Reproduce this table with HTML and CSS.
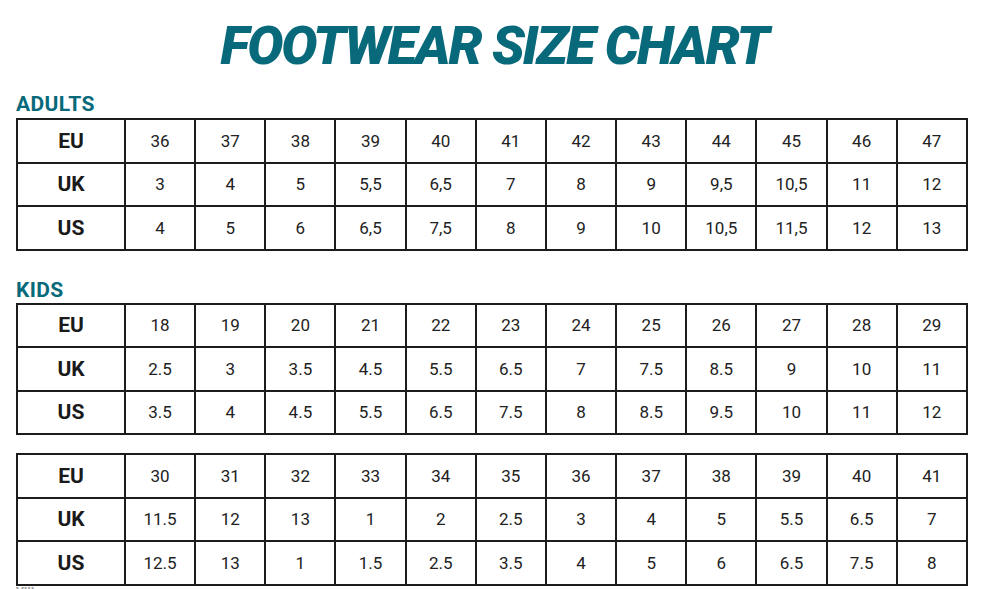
FILE: index.html
```html
<!DOCTYPE html>
<html>
<head>
<meta charset="utf-8">
<link rel="stylesheet" href="styles.css">
</head>
<body>
<div class="page">
  <h1 class="title">FOOTWEAR SIZE CHART</h1>

  <h2 class="section">ADULTS</h2>
  <table class="chart">
    <tr><th>EU</th><td>36</td><td>37</td><td>38</td><td>39</td><td>40</td><td>41</td><td>42</td><td>43</td><td>44</td><td>45</td><td>46</td><td>47</td></tr>
    <tr><th>UK</th><td>3</td><td>4</td><td>5</td><td>5,5</td><td>6,5</td><td>7</td><td>8</td><td>9</td><td>9,5</td><td>10,5</td><td>11</td><td>12</td></tr>
    <tr><th>US</th><td>4</td><td>5</td><td>6</td><td>6,5</td><td>7,5</td><td>8</td><td>9</td><td>10</td><td>10,5</td><td>11,5</td><td>12</td><td>13</td></tr>
  </table>

  <h2 class="section kids">KIDS</h2>
  <table class="chart">
    <tr><th>EU</th><td>18</td><td>19</td><td>20</td><td>21</td><td>22</td><td>23</td><td>24</td><td>25</td><td>26</td><td>27</td><td>28</td><td>29</td></tr>
    <tr><th>UK</th><td>2.5</td><td>3</td><td>3.5</td><td>4.5</td><td>5.5</td><td>6.5</td><td>7</td><td>7.5</td><td>8.5</td><td>9</td><td>10</td><td>11</td></tr>
    <tr><th>US</th><td>3.5</td><td>4</td><td>4.5</td><td>5.5</td><td>6.5</td><td>7.5</td><td>8</td><td>8.5</td><td>9.5</td><td>10</td><td>11</td><td>12</td></tr>
  </table>

  <table class="chart second">
    <tr><th>EU</th><td>30</td><td>31</td><td>32</td><td>33</td><td>34</td><td>35</td><td>36</td><td>37</td><td>38</td><td>39</td><td>40</td><td>41</td></tr>
    <tr><th>UK</th><td>11.5</td><td>12</td><td>13</td><td>1</td><td>2</td><td>2.5</td><td>3</td><td>4</td><td>5</td><td>5.5</td><td>6.5</td><td>7</td></tr>
    <tr><th>US</th><td>12.5</td><td>13</td><td>1</td><td>1.5</td><td>2.5</td><td>3.5</td><td>4</td><td>5</td><td>6</td><td>6.5</td><td>7.5</td><td>8</td></tr>
  </table>
  <div class="foot">VIII</div>
</div>
</body>
</html>
```

FILE: styles.css
```css
html, body {
  margin: 0;
  padding: 0;
  background: #ffffff;
}

.page {
  width: 988px;
  height: 589px;
  overflow: hidden;
  padding: 0 0 0 16px;
  box-sizing: border-box;
  font-family: Roboto, "DejaVu Sans", sans-serif;
  color: #1c1c1c;
}

.title {
  margin: 0;
  padding-top: 18px;
  padding-right: 16px;
  height: 89px;
  box-sizing: border-box;
  text-align: center;
  font-size: 54px;
  line-height: 56px;
  font-weight: 900;
  font-style: italic;
  color: #07697a;
  letter-spacing: -2.1px;
}

.section {
  margin: 0;
  height: 29px;
  padding-top: 2px;
  box-sizing: border-box;
  font-size: 21px;
  line-height: 26px;
  font-weight: 700;
  color: #07697a;
  letter-spacing: 0.4px;
}

.section.kids {
  margin-top: 27px;
  height: 25px;
  padding-top: 0;
  line-height: 24px;
}

.chart {
  border-collapse: collapse;
  table-layout: fixed;
  width: 952px;
}

.chart.second {
  margin-top: 18px;
}

.chart th,
.chart td {
  border: 2px solid #1c1c1c;
  height: 41.5px;
  padding: 0;
  text-align: center;
}

.chart th {
  width: 106px;
  font-size: 21px;
  font-weight: 700;
  color: #1a1a1a;
}

.chart td {
  font-size: 17px;
  font-weight: 400;
  color: #222222;
}

.foot {
  margin-top: 0;
  font-size: 12px;
  line-height: 12px;
  color: #9a9a9a;
  font-weight: 700;
}
```
